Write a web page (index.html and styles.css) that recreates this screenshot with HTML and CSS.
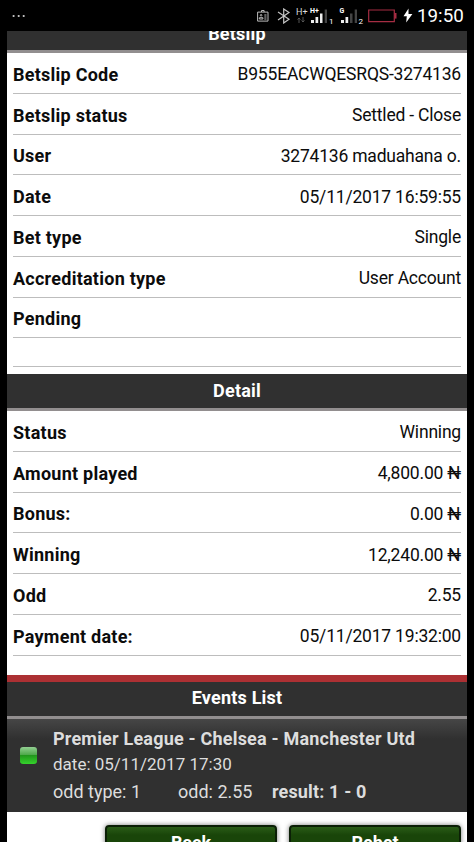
FILE: index.html
```html
<!DOCTYPE html>
<html lang="en">
<head>
  <meta charset="UTF-8" />
  <title>Betslip</title>
  <link rel="stylesheet" href="styles.css">
</head>
<body>
  <div class="statusbar">
    <svg class="dots" width="16" height="4" viewBox="0 0 16 4" fill="#ccc">
      <circle cx="1.6" cy="2" r="1.1"/><circle cx="6.7" cy="2" r="1.1"/><circle cx="11.7" cy="2" r="1.1"/>
    </svg>
    <div class="status-icons">
      <!-- id card -->
      <svg class="card-icon" width="12" height="12" viewBox="0 0 12 12" fill="none" stroke="#bbb">
        <path d="M.6 2.1h10.4v9H.6zM4.5 2V.5h2.6V2"/>
        <path d="M2.3 9h3.6V7.7H2.3zM7.3 5h2.2M7.3 7h2.2M7.3 9h2.2"/>
        <circle cx="4.1" cy="5.3" r=".8"/>
      </svg>
      <!-- bluetooth -->
      <svg class="bt-icon" width="14" height="16" viewBox="0 0 14 16" fill="none" stroke="#c4c4c4" stroke-width="1.2">
        <path d="M1 4l11 7.3-5.3 3.7V1L12 4.6 1 12"/>
      </svg>
      <div class="net">
        <span>H+</span>
        <svg width="10" height="6" viewBox="0 0 10 6" fill="none" stroke="#555">
          <path d="M3 6V1M1.5 2.5L3 1l1.5 1.5M7 0v5M5.5 3.5L7 5l1.5-1.5"/>
        </svg>
      </div>
      <div class="signal signal-one">
        <span class="signal-type">H+</span>
        <svg width="18" height="14" viewBox="0 0 18 14">
          <path fill="#eee" d="M1 11h3v3H1zM5.5 8h2.7v6H5.5zM10 4.5h2.5V14H10z"/>
          <path fill="#444" d="M14.7.5H17V14h-2.3z"/>
        </svg>
        <span class="sim">1</span>
      </div>
      <div class="signal signal-two">
        <span class="signal-type">G</span>
        <svg width="18" height="14" viewBox="0 0 18 14">
          <path fill="#eee" d="M1 11h3v3H1zM5.5 8h2.7v6H5.5z"/>
          <path fill="#444" d="M10 4.5h2.5V14H10zM14.7.5H17V14h-2.3z"/>
        </svg>
        <span class="sim">2</span>
      </div>
      <svg class="battery" width="29" height="14" viewBox="0 0 29 14">
        <path fill="none" stroke="#a62d43" stroke-width="1.2" d="M.7 1h25.6v11.6H.7z"/>
        <path fill="#a62d43" d="M26.5 4h2v5.6h-2z"/>
      </svg>
      <svg class="bolt" width="10" height="15" viewBox="0 0 10 15" fill="#fff">
        <path d="M5.5.5L.5 8.2h3.3L3.2 14.5 9.4 6H5.5z"/>
      </svg>
      <span class="clock">19:50</span>
    </div>
  </div>

  <div class="page">
    <div class="title title-cut"><h2>Betslip</h2></div>
    <ul class="rows">
      <li><b>Betslip Code</b><span>B955EACWQESRQS-3274136</span></li>
      <li><b>Betslip status</b><span>Settled - Close</span></li>
      <li><b>User</b><span>3274136 maduahana o.</span></li>
      <li><b>Date</b><span>05/11/2017 16:59:55</span></li>
      <li><b>Bet type</b><span>Single</span></li>
      <li><b>Accreditation type</b><span>User Account</span></li>
      <li><b>Pending</b><span></span></li>
      <li class="empty"></li>
    </ul>

    <div class="title"><h2>Detail</h2></div>
    <ul class="rows">
      <li><b>Status</b><span>Winning</span></li>
      <li><b>Amount played</b><span>4,800.00 ₦</span></li>
      <li><b>Bonus:</b><span>0.00 ₦</span></li>
      <li><b>Winning</b><span>12,240.00 ₦</span></li>
      <li><b>Odd</b><span>2.55</span></li>
      <li><b>Payment date:</b><span>05/11/2017 19:32:00</span></li>
    </ul>

    <div class="title title-events"><h2>Events List</h2></div>
    <div class="event">
      <div class="led"></div>
      <div class="event-info">
        <p class="match">Premier League - Chelsea - Manchester Utd</p>
        <p class="event-date">date: 05/11/2017 17:30</p>
        <p class="odds"><span class="odd-type">odd type: 1</span><span class="odd">odd: 2.55</span><b>result: 1 - 0</b></p>
      </div>
    </div>

    <div class="buttons">
      <button class="btn">Back</button>
      <button class="btn">Rebet</button>
    </div>
  </div>
</body>
</html>
```

FILE: styles.css
```css
* {
  box-sizing: border-box;
}

body {
  margin: 0;
  height: 842px;
  overflow: hidden;
  background: #000;
  font-family: Roboto, "Noto Sans", sans-serif;
  color: #0c0c0c;
}

.statusbar {
  height: 31px;
  padding: 0 11px 0 12px;
  display: flex;
  justify-content: space-between;
  align-items: center;
  color: #fff;
}

.status-icons {
  display: flex;
  align-items: center;
}

.card-icon {
  margin-right: 8px;
}

.bt-icon {
  margin-right: 5px;
}

.net {
  width: 14px;
  display: flex;
  flex-direction: column;
  font-size: 9px;
  line-height: 9px;
  color: #ddd;
}

.signal {
  position: relative;
  display: flex;
  align-items: flex-end;
}

.signal-one {
  margin-right: 6px;
}

.signal-type {
  position: absolute;
  top: -1px;
  left: 0;
  font-size: 7px;
  line-height: 7px;
  font-weight: bold;
}

.sim {
  font-size: 8px;
  line-height: 7px;
  margin: 0 0 -2px 1px;
}

.battery {
  margin: 0 6px 0 5px;
}

.bolt {
  margin-right: 4px;
}

.clock {
  width: 46px;
  font-size: 18.8px;
  line-height: 31px;
  padding-top: 2px;
  white-space: nowrap;
}

.page {
  margin: 0 7px 0 7px;
  height: 811px;
  overflow: hidden;
  background: #fff;
}

.title {
  height: 37px;
  background: #303030;
  border-bottom: 3px solid #928e8f;
}

.title h2 {
  margin: 0;
  font-size: 18px;
  line-height: 33px;
  letter-spacing: 0.2px;
  text-align: center;
  color: #fff;
}

.title-cut {
  height: 22px;
  display: flex;
  flex-direction: column;
  justify-content: flex-end;
  overflow: hidden;
}

.rows {
  list-style: none;
  margin: 0 6px 7px;
  padding: 0;
}

.rows li {
  height: 40.75px;
  padding-top: 3px;
  display: flex;
  justify-content: space-between;
  align-items: center;
  border-bottom: 1px solid #bdbdbd;
  font-size: 18px;
}

.rows li.empty {
  height: 28.75px;
}

.rows b {
  letter-spacing: 0.25px;
}

.rows span {
  font-size: 17.5px;
  letter-spacing: -0.2px;
}

.title-events {
  height: 44px;
  margin-top: 19.5px;
  border-top: 7px solid #ac3033;
}

.title-events h2 {
  line-height: 31px;
}

.event {
  height: 93px;
  padding-left: 13px;
  display: flex;
  background: linear-gradient(#464646, #303030 20px);
  color: #ddd;
}

.led {
  width: 17px;
  height: 17px;
  margin: 28px 16px 0 0;
  border-radius: 3px;
  background: linear-gradient(#93cf92, #4fa94c 45%, #21971c 50%, #35d32c);
}

.event-info p {
  margin: 0;
  white-space: nowrap;
}

.event-info .match {
  padding-top: 7px;
  font-size: 18px;
  line-height: 25px;
  font-weight: bold;
  letter-spacing: 0.2px;
}

.event-info .event-date {
  font-size: 17px;
  line-height: 26px;
}

.event-info .odds {
  display: flex;
  font-size: 18px;
  line-height: 29px;
}

.odd-type {
  width: 125px;
}

.odd {
  width: 94px;
}

.odds b {
  letter-spacing: 0.15px;
}

.buttons {
  display: flex;
  gap: 12px;
  margin: 13px 6px 0 98px;
}

.btn {
  flex: 1;
  height: 36px;
  padding: 0 0 2px;
  border: 2px solid #0b1f06;
  border-radius: 4px;
  background: linear-gradient(#2a5c17, #194509 8px);
  box-shadow: 0 0 5px #777;
  font-family: inherit;
  font-size: 18px;
  font-weight: bold;
  color: #fff;
}
```
